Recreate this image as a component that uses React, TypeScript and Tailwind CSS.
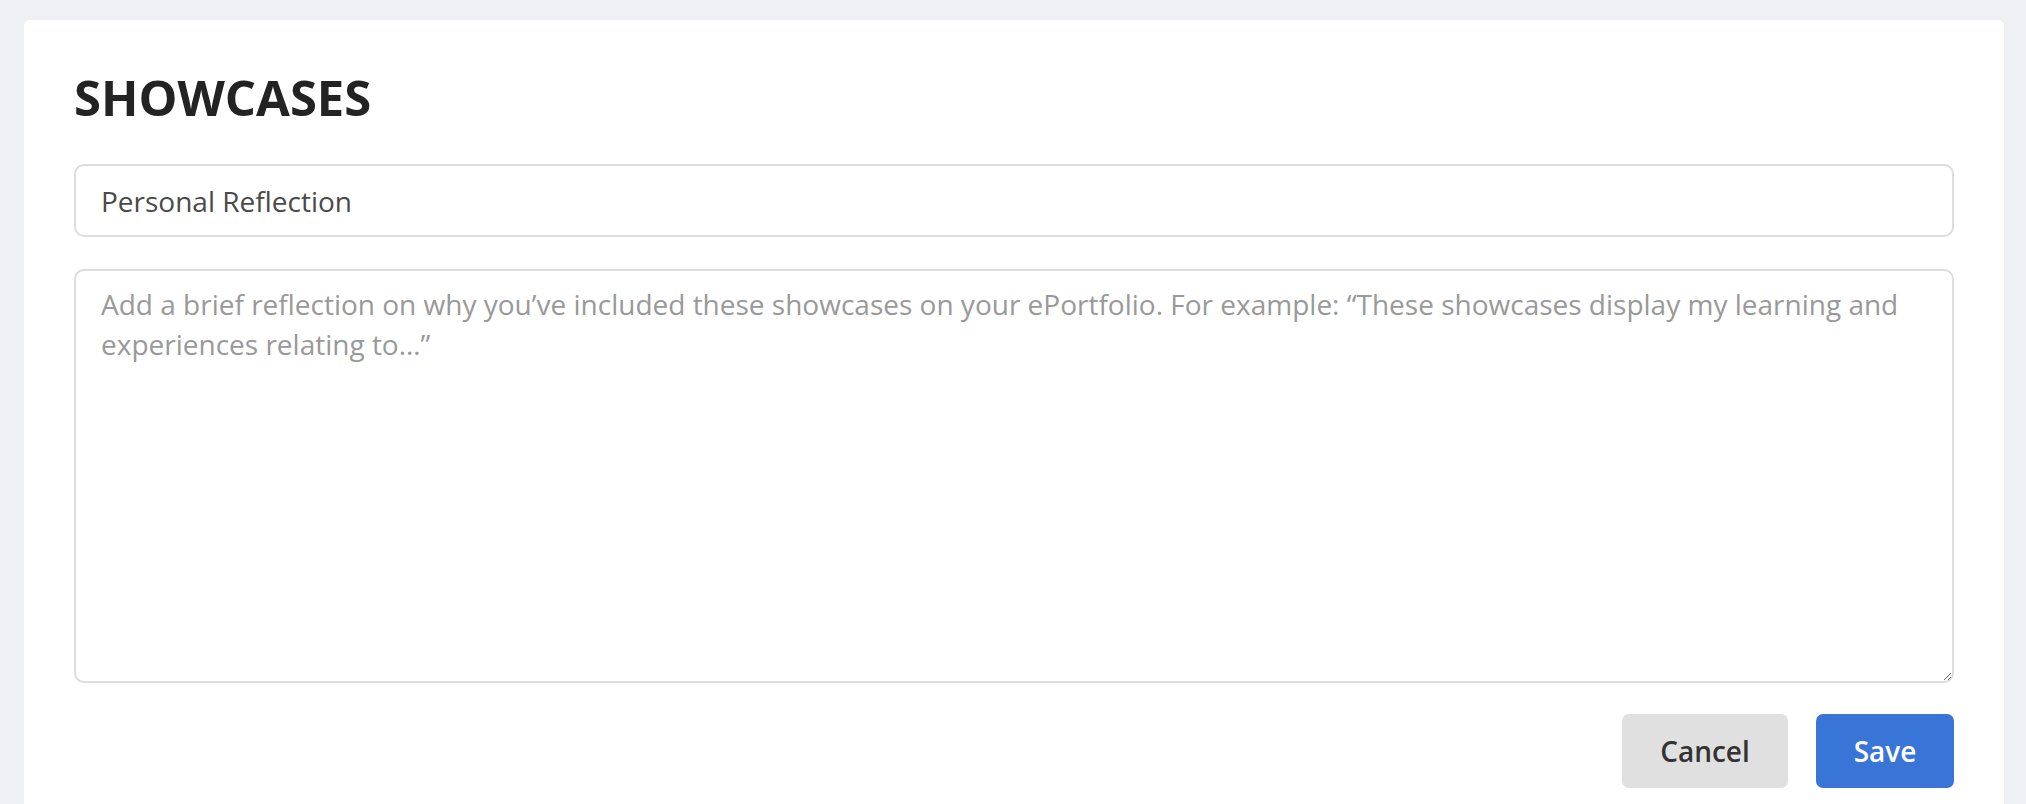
import React, { useState } from 'react';

const font = "font-['Open_Sans','Noto_Sans',sans-serif]";

export default function App() {
  const [title, setTitle] = useState('Personal Reflection');
  const [body, setBody] = useState('');

  return (
    <div className={`min-h-screen bg-[#eff0f4] pt-[20px] pl-[24px] pr-[22px] ${font}`}>
      <div className="bg-white rounded-[6px] px-[50px] pt-[51px] pb-[50px]">
        <h1 className="text-[49px] leading-[52px] font-bold text-[#232323]">SHOWCASES</h1>

        <input
          value={title}
          onChange={(e) => setTitle(e.target.value)}
          className="mt-[41px] block w-full h-[73px] rounded-[10px] border-2 border-[#dddddd] px-[25px] text-[28px] text-[#4a4a4a] outline-none"
        />

        <textarea
          value={body}
          onChange={(e) => setBody(e.target.value)}
          placeholder="Add a brief reflection on why you’ve included these showcases on your ePortfolio. For example: “These showcases display my learning and experiences relating to…”"
          className="mt-[32px] block w-full h-[414px] rounded-[10px] border-2 border-[#dddddd] px-[25px] pt-[13px] text-[28px] leading-[40px] text-[#4a4a4a] placeholder:text-[#999999] outline-none resize-y"
        />

        <div className="mt-[31px] flex justify-end gap-[28px]">
          <button className="h-[74px] w-[166px] rounded-[7px] bg-[#e0e0e0] text-[28px] font-semibold text-[#333333]">
            Cancel
          </button>
          <button className="h-[74px] w-[138px] rounded-[7px] bg-[#3875d7] text-[28px] font-semibold text-white">
            Save
          </button>
        </div>
      </div>
    </div>
  );
}
